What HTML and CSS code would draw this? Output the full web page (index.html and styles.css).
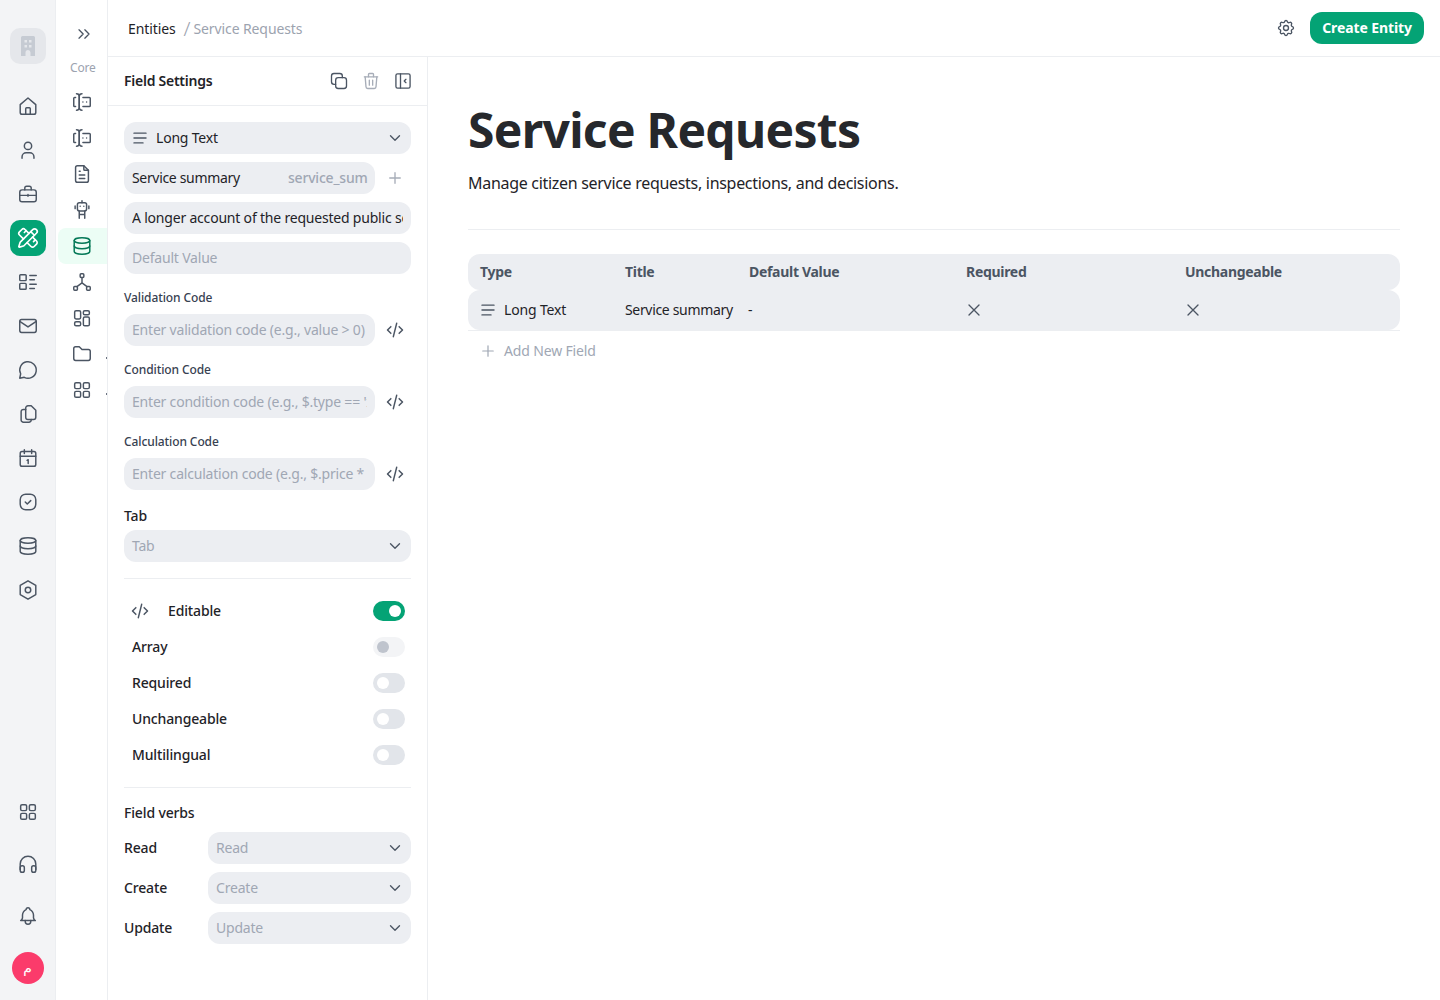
FILE: index.html
```html
<!DOCTYPE html>
<html lang="en">
<head>
  <meta charset="UTF-8" />
  <meta name="viewport" content="width=device-width, initial-scale=1.0" />
  <title>Service Requests</title>
  <link rel="stylesheet" href="styles.css">
</head>
<body>
  <svg class="sprite" aria-hidden="true">
    <symbol id="i-home" viewBox="0 0 24 24"><path d="M3.500 10.500 12 3.200l8.500 7.300V19a2 2 0 0 1-2 2h-13a2 2 0 0 1-2-2z"/><path d="M9.500 21v-6a1 1 0 0 1 1-1h3a1 1 0 0 1 1 1v6"/></symbol>
    <symbol id="i-user" viewBox="0 0 24 24"><circle cx="12" cy="7.500" r="4"/><path d="M5.500 21v-1.500a4.500 4.500 0 0 1 4.500-4.500h4a4.500 4.500 0 0 1 4.500 4.500V21"/></symbol>
    <symbol id="i-case" viewBox="0 0 24 24"><rect x="3" y="7.500" width="18" height="13" rx="2.500"/><path d="M8.500 7.500V5.500a2 2 0 0 1 2-2h3a2 2 0 0 1 2 2v2M3 13.500h18M12 12.500v2"/></symbol>
    <symbol id="i-tools" viewBox="0 0 24 24"><path d="M13 7 8.700 2.700a2.410 2.410 0 0 0-3.400 0L2.700 5.300a2.410 2.410 0 0 0 0 3.400L7 13"/><path d="m8 6 2-2M18 16l2-2"/><path d="m17 11 4.300 4.300c.94.94.94 2.460 0 3.400l-2.600 2.600c-.94.94-2.460.94-3.400 0L11 17"/><path d="M21.174 6.812a1 1 0 0 0-3.986-3.987L3.842 16.174a2 2 0 0 0-.5.83l-1.321 4.352a.5.5 0 0 0 .623.622l4.353-1.32a2 2 0 0 0 .83-.497z"/><path d="m15 5 4 4"/></symbol>
    <symbol id="i-list" viewBox="0 0 24 24"><rect x="3" y="4" width="7" height="6.500" rx="1"/><rect x="3" y="13.500" width="7" height="6.500" rx="1"/><path d="M14 5h7M14 9.500h5M14 14.500h7M14 19h5"/></symbol>
    <symbol id="i-mail" viewBox="0 0 24 24"><rect x="3" y="5" width="18" height="14" rx="2"/><path d="m3 7 9 6 9-6"/></symbol>
    <symbol id="i-chat" viewBox="0 0 24 24"><path d="M7.900 20A9 9 0 1 0 4 16.100L3 21z"/></symbol>
    <symbol id="i-files" viewBox="0 0 24 24"><path d="M15.500 3H12a2.500 2.500 0 0 0-2.500 2.500v10A2.500 2.500 0 0 0 12 18h6a2.500 2.500 0 0 0 2.500-2.500V8z"/><path d="M9.500 7H7a2.500 2.500 0 0 0-2.500 2.500v9A2.500 2.500 0 0 0 7 21h6a2.500 2.500 0 0 0 2.500-2.500V18"/></symbol>
    <symbol id="i-cal" viewBox="0 0 24 24"><rect x="3.500" y="5" width="17" height="16" rx="2"/><path d="M3.500 10h17M8 3v4M16 3v4M11 14.500l1.200-.7V18"/></symbol>
    <symbol id="i-check" viewBox="0 0 24 24"><rect x="3.500" y="3.500" width="17" height="17" rx="6"/><path d="m9 12 2.200 2.200L15 10.500"/></symbol>
    <symbol id="i-db" viewBox="0 0 24 24"><ellipse cx="12" cy="6" rx="8.500" ry="3"/><path d="M3.500 6v12c0 1.660 3.800 3 8.500 3s8.500-1.340 8.500-3V6"/><path d="M3.500 12c0 1.660 3.800 3 8.500 3s8.500-1.340 8.500-3"/></symbol>
    <symbol id="i-hex" viewBox="0 0 24 24"><path d="m12 2 8.500 5v10L12 22l-8.500-5V7z"/><circle cx="12" cy="12" r="3"/></symbol>
    <symbol id="i-grid" viewBox="0 0 24 24"><rect x="4" y="4" width="6.500" height="6.500" rx="1.500"/><rect x="13.500" y="4" width="6.500" height="6.500" rx="1.500"/><rect x="4" y="13.500" width="6.500" height="6.500" rx="1.500"/><rect x="13.500" y="13.500" width="6.500" height="6.500" rx="1.500"/></symbol>
    <symbol id="i-head" viewBox="0 0 24 24"><path d="M3.500 18v-6a8.500 8.500 0 0 1 17 0v6"/><rect x="3.500" y="14" width="4.500" height="7" rx="2"/><rect x="16" y="14" width="4.500" height="7" rx="2"/></symbol>
    <symbol id="i-bell" viewBox="0 0 24 24"><path d="M10 5a2 2 0 1 1 4 0 7 7 0 0 1 4 6v3a4 4 0 0 0 2 3H4a4 4 0 0 0 2-3v-3a7 7 0 0 1 4-6"/><path d="M9 17v1a3 3 0 0 0 6 0v-1"/></symbol>
    <symbol id="i-double" viewBox="0 0 24 24"><path d="m6 7 5 5-5 5M13 7l5 5-5 5"/></symbol>
    <symbol id="i-forms" viewBox="0 0 24 24"><path d="M12 3a3 3 0 0 0-3 3v12a3 3 0 0 0 3 3"/><path d="M6 3a3 3 0 0 1 3 3v12a3 3 0 0 1-3 3"/><path d="M13 7h7a1 1 0 0 1 1 1v8a1 1 0 0 1-1 1h-7"/><path d="M5 7H4a1 1 0 0 0-1 1v8a1 1 0 0 0 1 1h1"/><path d="M17 12h.01M13 12h.01"/></symbol>
    <symbol id="i-doc" viewBox="0 0 24 24"><path d="M14 3v4a1 1 0 0 0 1 1h4"/><path d="M17 21H7a2 2 0 0 1-2-2V5a2 2 0 0 1 2-2h7l5 5v11a2 2 0 0 1-2 2z"/><path d="M9 9h1M9 13h6M9 17h6"/></symbol>
    <symbol id="i-robot" viewBox="0 0 24 24"><rect x="7" y="4" width="10" height="9" rx="2"/><path d="M12 2v2M4.500 7.500v3M19.500 7.500v3M10 8h.01M14 8h.01M9 13v8M15 13v8M9 17h6"/></symbol>
    <symbol id="i-tree" viewBox="0 0 24 24"><rect x="10" y="3" width="4" height="4" rx="1"/><rect x="3" y="17" width="4" height="4" rx="1"/><rect x="17" y="17" width="4" height="4" rx="1"/><path d="M12 7v6M12 13l-5.500 4M12 13l5.500 4"/></symbol>
    <symbol id="i-layout" viewBox="0 0 24 24"><rect x="4" y="4" width="6.500" height="9" rx="1.500"/><rect x="4" y="16" width="6.500" height="4.500" rx="1.500"/><rect x="13.500" y="4" width="6.500" height="4.500" rx="1.500"/><rect x="13.500" y="11" width="6.500" height="9.500" rx="1.500"/></symbol>
    <symbol id="i-folder" viewBox="0 0 24 24"><path d="M5 4h4l3 3h7a2 2 0 0 1 2 2v8a2 2 0 0 1-2 2H5a2 2 0 0 1-2-2V6a2 2 0 0 1 2-2"/></symbol>
    <symbol id="i-copy" viewBox="0 0 24 24"><rect x="8" y="8" width="13" height="13" rx="3"/><path d="M16 8V6a3 3 0 0 0-3-3H6a3 3 0 0 0-3 3v7a3 3 0 0 0 3 3h2"/></symbol>
    <symbol id="i-trash" viewBox="0 0 24 24"><path d="M4 7h16M10 11v6M14 11v6"/><path d="m5 7 1 12a2 2 0 0 0 2 2h8a2 2 0 0 0 2-2l1-12"/><path d="M9 7V4a1 1 0 0 1 1-1h4a1 1 0 0 1 1 1v3"/></symbol>
    <symbol id="i-side" viewBox="0 0 24 24"><rect x="3.500" y="3.500" width="17" height="17" rx="2"/><path d="M9 3.500v17M15.500 10l-2 2 2 2"/></symbol>
    <symbol id="i-lines" viewBox="0 0 24 24"><path d="M4 5.500h16M4 12h16M4 18.500h12"/></symbol>
    <symbol id="i-chev" viewBox="0 0 24 24"><path d="m6 9 6 6 6-6"/></symbol>
    <symbol id="i-plus" viewBox="0 0 24 24"><path d="M12 5v14M5 12h14"/></symbol>
    <symbol id="i-code" viewBox="0 0 24 24"><path d="m7 8-4 4 4 4M17 8l4 4-4 4M14 4l-4 16"/></symbol>
    <symbol id="i-x" viewBox="0 0 24 24"><path d="M18 6 6 18M6 6l12 12"/></symbol>
    <symbol id="i-gear" viewBox="0 0 24 24"><path d="M10.325 4.317c.426-1.756 2.924-1.756 3.350 0a1.724 1.724 0 0 0 2.573 1.066c1.543-.94 3.310.826 2.370 2.370a1.724 1.724 0 0 0 1.065 2.572c1.756.426 1.756 2.924 0 3.350a1.724 1.724 0 0 0-1.066 2.573c.94 1.543-.826 3.310-2.370 2.370a1.724 1.724 0 0 0-2.572 1.065c-.426 1.756-2.924 1.756-3.350 0a1.724 1.724 0 0 0-2.573-1.066c-1.543.94-3.310-.826-2.370-2.370a1.724 1.724 0 0 0-1.065-2.572c-1.756-.426-1.756-2.924 0-3.350a1.724 1.724 0 0 0 1.066-2.573c-.94-1.543.826-3.310 2.370-2.370 1 .608 2.296.07 2.572-1.065z"/><circle cx="12" cy="12" r="3"/></symbol>
  </svg>

  <div class="app">
    <!-- Main rail -->
    <nav class="rail">
      <div class="logo">
        <svg viewBox="0 0 14 20" width="14" height="20"><path class="logo-shape" fill-rule="evenodd" d="M1.500 0h11A1.500 1.500 0 0 1 14 1.500V20H9.500v-3.500a2.500 2.500 0 0 0-5 0V20H0V1.500A1.500 1.500 0 0 1 1.500 0zM3.500 4v2.500H6V4zM8 4v2.500h2.500V4zM3.500 9v2.500H6V9zM8 9v2.500h2.500V9z"/></svg>
      </div>
      <div class="rail-group">
        <a class="rail-item"><svg class="ico"><use href="#i-home"/></svg></a>
        <a class="rail-item"><svg class="ico"><use href="#i-user"/></svg></a>
        <a class="rail-item"><svg class="ico"><use href="#i-case"/></svg></a>
        <a class="rail-item active"><svg class="ico"><use href="#i-tools"/></svg></a>
        <a class="rail-item"><svg class="ico"><use href="#i-list"/></svg></a>
        <a class="rail-item"><svg class="ico"><use href="#i-mail"/></svg></a>
        <a class="rail-item"><svg class="ico"><use href="#i-chat"/></svg></a>
        <a class="rail-item"><svg class="ico"><use href="#i-files"/></svg></a>
        <a class="rail-item"><svg class="ico"><use href="#i-cal"/></svg></a>
        <a class="rail-item"><svg class="ico"><use href="#i-check"/></svg></a>
        <a class="rail-item"><svg class="ico"><use href="#i-db"/></svg></a>
        <a class="rail-item"><svg class="ico"><use href="#i-hex"/></svg></a>
      </div>
      <div class="rail-bottom">
        <a class="rail-item"><svg class="ico"><use href="#i-grid"/></svg></a>
        <a class="rail-item"><svg class="ico"><use href="#i-head"/></svg></a>
        <a class="rail-item"><svg class="ico"><use href="#i-bell"/></svg></a>
        <div class="avatar">م</div>
      </div>
    </nav>

    <!-- Secondary rail -->
    <nav class="subrail">
      <a class="sub-toggle"><svg class="ico"><use href="#i-double"/></svg></a>
      <div class="sub-title">Core</div>
      <a class="sub-item"><svg class="ico"><use href="#i-forms"/></svg></a>
      <a class="sub-item"><svg class="ico"><use href="#i-forms"/></svg></a>
      <a class="sub-item"><svg class="ico"><use href="#i-doc"/></svg></a>
      <a class="sub-item"><svg class="ico"><use href="#i-robot"/></svg></a>
      <a class="sub-item active"><svg class="ico"><use href="#i-db"/></svg></a>
      <a class="sub-item"><svg class="ico"><use href="#i-tree"/></svg></a>
      <a class="sub-item"><svg class="ico"><use href="#i-layout"/></svg></a>
      <a class="sub-item cut"><svg class="ico"><use href="#i-folder"/></svg></a>
      <a class="sub-item cut"><svg class="ico"><use href="#i-grid"/></svg></a>
    </nav>

    <div class="content">
      <header class="topbar">
        <div class="crumbs">
          <span class="crumb">Entities</span>
          <span class="crumb-sep">/</span>
          <span class="crumb-current">Service Requests</span>
        </div>
        <div class="top-actions">
          <svg class="ico gear"><use href="#i-gear"/></svg>
          <button class="btn-primary">Create Entity</button>
        </div>
      </header>

      <div class="body">
        <!-- Field settings panel -->
        <aside class="panel">
          <div class="panel-head">
            <h3>Field Settings</h3>
            <div class="panel-tools">
              <svg class="ico tool"><use href="#i-copy"/></svg>
              <svg class="ico tool muted"><use href="#i-trash"/></svg>
              <svg class="ico tool"><use href="#i-side"/></svg>
            </div>
          </div>

          <div class="panel-body">
            <div class="stack">
              <div class="select">
                <svg class="ico type-ico"><use href="#i-lines"/></svg>
                <span class="select-value">Long Text</span>
                <svg class="ico chev"><use href="#i-chev"/></svg>
              </div>
              <div class="with-btn">
                <div class="field split">
                  <input class="title-input" value="Service summary">
                  <input class="key-input" value="service_summary">
                </div>
                <span class="side-btn faint"><svg class="ico"><use href="#i-plus"/></svg></span>
              </div>
              <input class="field" value="A longer account of the requested public service and its details">
              <input class="field" placeholder="Default Value">
            </div>

            <label class="small-label">Validation Code</label>
            <div class="with-btn">
              <input class="field" placeholder="Enter validation code (e.g., value > 0)">
              <span class="side-btn"><svg class="ico"><use href="#i-code"/></svg></span>
            </div>

            <label class="small-label">Condition Code</label>
            <div class="with-btn">
              <input class="field" placeholder="Enter condition code (e.g., $.type == 'x')">
              <span class="side-btn"><svg class="ico"><use href="#i-code"/></svg></span>
            </div>

            <label class="small-label">Calculation Code</label>
            <div class="with-btn">
              <input class="field" placeholder="Enter calculation code (e.g., $.price * 2)">
              <span class="side-btn"><svg class="ico"><use href="#i-code"/></svg></span>
            </div>

            <label class="tab-label">Tab</label>
            <div class="select">
              <span class="select-value placeholder">Tab</span>
              <svg class="ico chev"><use href="#i-chev"/></svg>
            </div>

            <hr class="rule rule-top">

            <div class="toggles">
              <div class="toggle-row">
                <span class="toggle-name"><svg class="ico code-ico"><use href="#i-code"/></svg><span class="txt">Editable</span></span>
                <span class="switch on"></span>
              </div>
              <div class="toggle-row">
                <span class="toggle-name"><span class="txt">Array</span></span>
                <span class="switch disabled"></span>
              </div>
              <div class="toggle-row">
                <span class="toggle-name"><span class="txt">Required</span></span>
                <span class="switch"></span>
              </div>
              <div class="toggle-row">
                <span class="toggle-name"><span class="txt">Unchangeable</span></span>
                <span class="switch"></span>
              </div>
              <div class="toggle-row">
                <span class="toggle-name"><span class="txt">Multilingual</span></span>
                <span class="switch"></span>
              </div>
            </div>

            <hr class="rule rule-bottom">

            <div class="verbs-title">Field verbs</div>
            <div class="verbs">
              <div class="verb-row">
                <span class="verb-name txt">Read</span>
                <div class="select"><span class="select-value placeholder">Read</span><svg class="ico chev"><use href="#i-chev"/></svg></div>
              </div>
              <div class="verb-row">
                <span class="verb-name txt">Create</span>
                <div class="select"><span class="select-value placeholder">Create</span><svg class="ico chev"><use href="#i-chev"/></svg></div>
              </div>
              <div class="verb-row">
                <span class="verb-name txt">Update</span>
                <div class="select"><span class="select-value placeholder">Update</span><svg class="ico chev"><use href="#i-chev"/></svg></div>
              </div>
            </div>
          </div>
        </aside>

        <main class="main">
          <h1>Service Requests</h1>
          <p class="lead">Manage citizen service requests, inspections, and decisions.</p>
          <hr class="main-rule">

          <div class="fields-table">
            <div class="t-row t-head">
              <div>Type</div>
              <div>Title</div>
              <div>Default Value</div>
              <div>Required</div>
              <div>Unchangeable</div>
            </div>
            <div class="t-row t-data">
              <div class="t-type"><svg class="ico type-ico"><use href="#i-lines"/></svg><span class="txt">Long Text</span></div>
              <div class="t-title">Service summary</div>
              <div class="t-dash">-</div>
              <div><svg class="ico x-ico"><use href="#i-x"/></svg></div>
              <div><svg class="ico x-ico"><use href="#i-x"/></svg></div>
            </div>
          </div>
          <div class="add-field"><svg class="ico add-ico"><use href="#i-plus"/></svg><span class="txt">Add New Field</span></div>
        </main>
      </div>
    </div>
  </div>
</body>
</html>
```

FILE: styles.css
```css
* { box-sizing: border-box; }

body {
  margin: 0;
  font-family: "Noto Sans", "DejaVu Sans", sans-serif;
  font-size: 14px;
  letter-spacing: -0.15px;
  color: #1f2328;
  background: #fff;
  height: 100vh;
  overflow: hidden;
}

.sprite { display: none; }

.ico {
  width: 22px;
  height: 22px;
  fill: none;
  stroke: #4b5563;
  stroke-width: 1.6;
  stroke-linecap: round;
  stroke-linejoin: round;
  flex: none;
}

/* Noto sits a little lower than the box centre */
.txt { padding-bottom: 2px; }

.app {
  display: flex;
  height: 100vh;
}

/* MAIN RAIL */
.rail {
  width: 56px;
  flex: none;
  background: #f3f4f6;
  border-right: 1px solid #eceef1;
  display: flex;
  flex-direction: column;
  align-items: center;
  padding-top: 28px;
}

.logo {
  width: 36px;
  height: 36px;
  border-radius: 10px;
  background: #e5e7eb;
  display: flex;
  align-items: center;
  justify-content: center;
}

.logo-shape { fill: #c6cbd3; }

.rail-group {
  display: flex;
  flex-direction: column;
  gap: 8px;
  margin-top: 24px;
}

.rail-item {
  width: 36px;
  height: 36px;
  border-radius: 10px;
  display: flex;
  align-items: center;
  justify-content: center;
}

.rail-item.active { background: #04a375; }
.rail-item.active .ico { stroke: #fff; stroke-width: 1.8; }

.rail-bottom {
  margin-top: auto;
  padding-bottom: 16px;
  display: flex;
  flex-direction: column;
  align-items: center;
  gap: 16px;
}

.avatar {
  width: 32px;
  height: 32px;
  margin-top: 2px;
  border-radius: 50%;
  background: #fb3b6b;
  color: #fff;
  font-family: "DejaVu Sans", sans-serif;
  font-size: 14px;
  display: flex;
  align-items: center;
  justify-content: center;
}

/* SECONDARY RAIL */
.subrail {
  width: 52px;
  flex: none;
  border-right: 1px solid #eceef1;
  display: flex;
  flex-direction: column;
  padding-left: 2px;
  overflow: hidden;
}

.sub-toggle {
  height: 36px;
  margin-top: 16px;
  padding-left: 16px;
  display: flex;
  align-items: center;
}

.sub-toggle .ico { width: 20px; height: 20px; }

.sub-title {
  font-size: 12px;
  color: #9ca3af;
  line-height: 16px;
  margin: 8px 0 8px 12px;
}

.sub-item {
  height: 36px;
  display: flex;
  align-items: center;
  padding-left: 13px;
  border-radius: 8px 0 0 8px;
}

.sub-item.active { background: #ecfdf5; }
.sub-item.active .ico { stroke: #047857; }

.sub-item.cut::after {
  content: "";
  width: 1px;
  height: 2px;
  margin: 7px 0 0 13px;
  background: #6b7280;
}

/* TOP BAR */
.content {
  flex: 1;
  min-width: 0;
  display: flex;
  flex-direction: column;
}

.topbar {
  height: 57px;
  flex: none;
  border-bottom: 1px solid #eceef1;
  padding: 0 16px 0 20px;
  display: flex;
  align-items: center;
  justify-content: space-between;
}

.crumbs {
  display: flex;
  align-items: center;
  letter-spacing: -0.1px;
}

.crumb-sep {
  color: #9ca3af;
  font-size: 20px;
  font-weight: 300;
  margin: 0 3px 0 8px;
}

.crumb-current { color: #9ca3af; }

.top-actions {
  display: flex;
  align-items: center;
  gap: 14px;
}

.gear { width: 20px; height: 20px; }

.btn-primary {
  height: 32px;
  padding: 0 12px 2px;
  border: 0;
  border-radius: 12px;
  background: #04a375;
  color: #fff;
  letter-spacing: -0.1px;
  font: 700 14px "Noto Sans", sans-serif;
}

.body {
  flex: 1;
  min-height: 0;
  display: flex;
}

/* FIELD SETTINGS */
.panel {
  width: 320px;
  flex: none;
  border-right: 1px solid #eceef1;
}

.panel-head {
  height: 49px;
  border-bottom: 1px solid #eceef1;
  padding: 0 16px;
  display: flex;
  align-items: center;
  justify-content: space-between;
}

.panel-head h3 {
  margin: 0;
  padding-bottom: 2px;
  font-size: 14px;
  font-weight: 600;
  letter-spacing: -0.25px;
}

.panel-tools {
  display: flex;
  gap: 12px;
  margin-right: -2px;
}

.tool { width: 20px; height: 20px; }
.tool.muted { stroke: #a7adb8; }

.panel-body { padding: 16px 16px 0; }

.stack {
  display: flex;
  flex-direction: column;
  gap: 8px;
}

.field,
.select {
  height: 32px;
  width: 100%;
  border: 0;
  border-radius: 12px;
  background: #eceef2;
  font: 14px "Noto Sans", sans-serif;
  letter-spacing: -0.2px;
  color: #1f2328;
  padding: 0 8px;
  outline: none;
}

input.field { padding-bottom: 2px; }

.field::placeholder { color: #a0a7b4; opacity: 1; }

.select {
  display: flex;
  align-items: center;
}

.select-value {
  flex: 1;
  padding-bottom: 2px;
}

.select-value.placeholder { color: #a0a7b4; }

.type-ico {
  width: 18px;
  height: 18px;
  stroke-width: 1.9;
}

.select .type-ico { margin: 0 7px 0 -1px; }

.chev {
  width: 18px;
  height: 18px;
  stroke-width: 1.8;
  margin-right: -1px;
}

.with-btn {
  display: flex;
  align-items: center;
  gap: 4px;
}

.with-btn .field { flex: 1; min-width: 0; }

.side-btn {
  width: 32px;
  height: 32px;
  flex: none;
  display: flex;
  align-items: center;
  justify-content: center;
}

.side-btn .ico { width: 20px; height: 20px; stroke-width: 1.8; }
.side-btn.faint .ico { width: 18px; height: 18px; stroke: #a7adb8; }

.split {
  display: flex;
  align-items: center;
  padding-right: 7px;
}

.split input {
  border: 0;
  background: none;
  outline: none;
  padding: 0 0 2px;
  font: 14px "Noto Sans", sans-serif;
  min-width: 0;
}

.title-input {
  flex: 1;
  color: #1f2328;
  letter-spacing: -0.33px;
}

.split .key-input {
  width: 80px;
  flex: none;
  color: #a0a7b4;
  font-weight: 500;
  letter-spacing: -0.2px;
}

.small-label {
  display: block;
  font-size: 12px;
  font-weight: 500;
  letter-spacing: -0.1px;
  color: #374151;
  line-height: 16px;
  margin: 16px 0 8px;
}

.tab-label {
  display: block;
  font-size: 14px;
  font-weight: 500;
  line-height: 20px;
  margin: 16px 0 4px;
}

.rule {
  border: 0;
  border-top: 1px solid #eceef1;
  margin: 0;
}

.rule-top { margin-top: 16px; }
.rule-bottom { margin-top: 14px; }

.toggles { padding: 14px 6px 0 8px; }

.toggle-row {
  height: 36px;
  display: flex;
  align-items: center;
  justify-content: space-between;
}

.toggle-name {
  display: flex;
  align-items: center;
  font-weight: 500;
}

.code-ico {
  width: 20px;
  height: 20px;
  stroke-width: 1.8;
  margin: 0 18px 0 -2px;
}

.switch {
  width: 32px;
  height: 20px;
  border-radius: 10px;
  background: #e2e5ea;
  padding: 4px;
  display: block;
}

.switch::after {
  content: "";
  display: block;
  width: 12px;
  height: 12px;
  border-radius: 50%;
  background: #fff;
}

.switch.on { background: #04a375; }
.switch.on::after { transform: translateX(12px); }
.switch.disabled { background: #f3f4f6; }
.switch.disabled::after { background: #bfc4cd; }

.verbs-title {
  font-weight: 500;
  line-height: 20px;
  margin-top: 15px;
}

.verbs {
  display: flex;
  flex-direction: column;
  gap: 8px;
  margin-top: 9px;
}

.verb-row {
  display: flex;
  align-items: center;
}

.verb-name {
  width: 84px;
  flex: none;
  font-weight: 500;
}

/* MAIN */
.main {
  flex: 1;
  min-width: 0;
  padding: 41px 40px 0;
}

.main h1 {
  margin: 0;
  font-size: 48px;
  line-height: 64px;
  font-weight: 700;
  letter-spacing: -0.7px;
  color: #26282c;
}

.lead {
  margin: 9px 0 0;
  font-size: 16px;
  line-height: 24px;
  letter-spacing: -0.3px;
}

.main-rule {
  border: 0;
  border-top: 1px solid #eceef1;
  margin: 34px 0 24px;
}

.t-row {
  display: grid;
  grid-template-columns: 145px 124px 217px 219px 1fr;
  align-items: center;
  background: #eceef2;
  border-radius: 12px;
}

.t-row > div {
  padding: 0 12px;
  white-space: nowrap;
}

.t-head {
  height: 36px;
  font-weight: 700;
  letter-spacing: -0.3px;
  color: #4b5563;
  padding-bottom: 2px;
}

.t-data { height: 40px; }

.t-row > .t-title {
  letter-spacing: -0.33px;
  padding-bottom: 2px;
}

.t-row > .t-dash {
  padding: 0 12px 2px 11px;
}

.fields-table { border-bottom: 1px solid #eceef1; }

.t-type {
  display: flex;
  align-items: center;
  gap: 7px;
}

.t-type .type-ico { margin-left: -1px; }

.x-ico {
  width: 20px;
  height: 20px;
  margin-left: -2px;
  display: block;
}

.add-field {
  display: flex;
  align-items: center;
  gap: 7px;
  height: 40px;
  padding-left: 11px;
  color: #a0a7b4;
}

.add-ico { width: 18px; height: 18px; stroke: #a0a7b4; }
```
